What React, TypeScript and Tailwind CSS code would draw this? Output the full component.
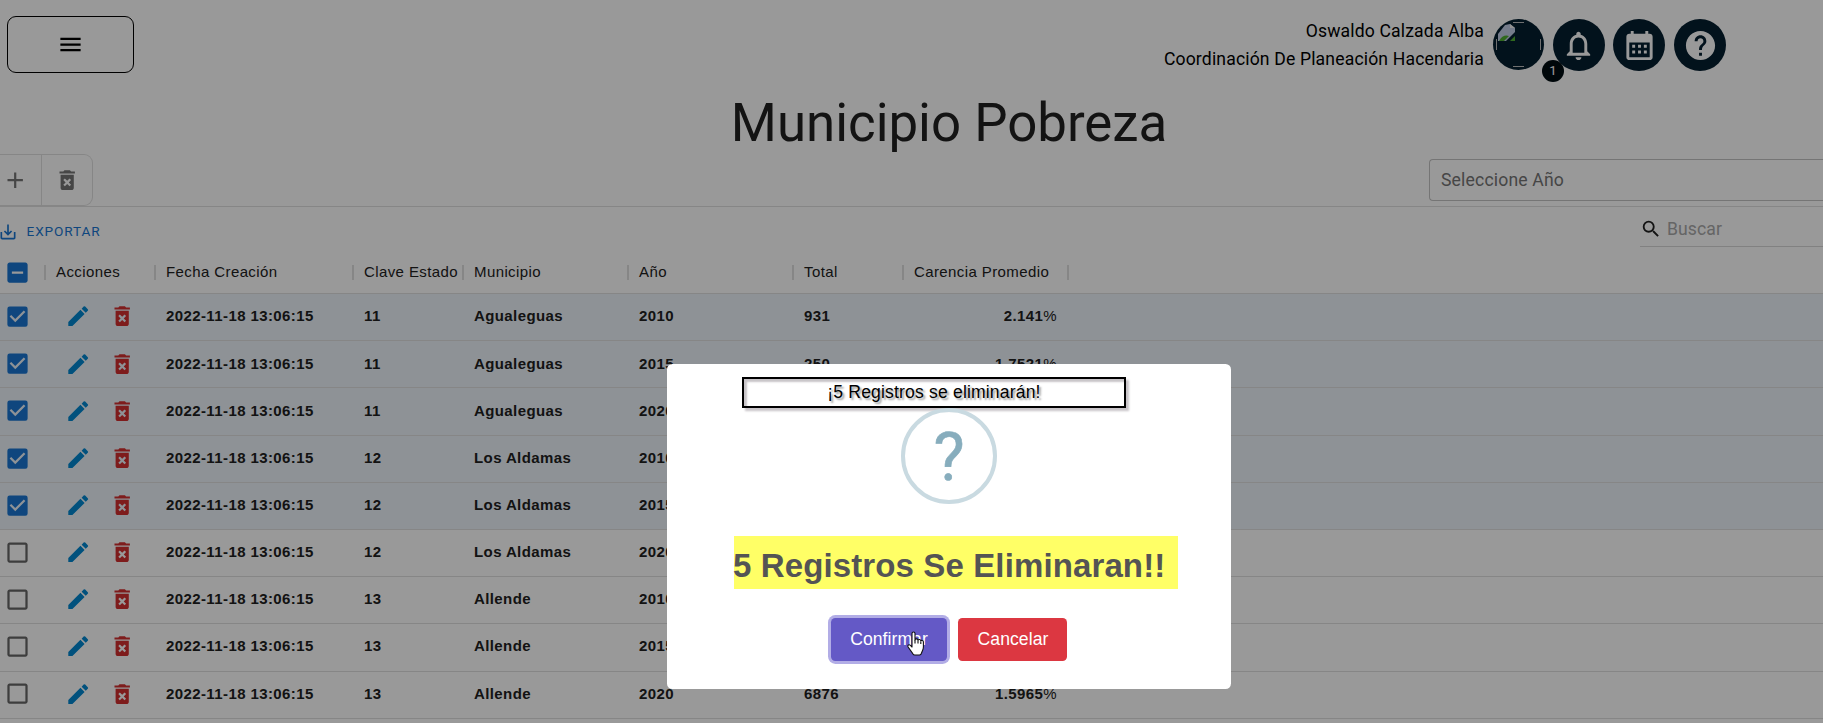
import React from "react";
import {
  MdMenu,
  MdAdd,
  MdDeleteForever,
  MdEdit,
  MdCheckBox,
  MdCheckBoxOutlineBlank,
  MdIndeterminateCheckBox,
  MdSearch,
  MdNotificationsNone,
  MdHelp,
} from "react-icons/md";

type Row = {
  clave: string;
  municipio: string;
  anio: string;
  total: string;
  carencia: string;
  selected: boolean;
};

const rows: Row[] = [
  { clave: "11", municipio: "Agualeguas", anio: "2010", total: "931", carencia: "2.141", selected: true },
  { clave: "11", municipio: "Agualeguas", anio: "2015", total: "250", carencia: "1.7521", selected: true },
  { clave: "11", municipio: "Agualeguas", anio: "2020", total: "", carencia: "", selected: true },
  { clave: "12", municipio: "Los Aldamas", anio: "2010", total: "", carencia: "", selected: true },
  { clave: "12", municipio: "Los Aldamas", anio: "2015", total: "", carencia: "", selected: true },
  { clave: "12", municipio: "Los Aldamas", anio: "2020", total: "", carencia: "", selected: false },
  { clave: "13", municipio: "Allende", anio: "2010", total: "", carencia: "", selected: false },
  { clave: "13", municipio: "Allende", anio: "2015", total: "", carencia: "", selected: false },
  { clave: "13", municipio: "Allende", anio: "2020", total: "6876", carencia: "1.5965", selected: false },
];

const columns = [
  { label: "Acciones", width: "w-[110px]" },
  { label: "Fecha Creación", width: "w-[198px]" },
  { label: "Clave Estado", width: "w-[110px]" },
  { label: "Municipio", width: "w-[165px]" },
  { label: "Año", width: "w-[165px]" },
  { label: "Total", width: "w-[110px]" },
  { label: "Carencia Promedio", width: "w-[165px]" },
];

function TopBar() {
  return (
    <header className="flex h-[88px] items-start pl-[7px] pr-[97px] pt-4">
      <button className="flex h-[57px] w-[127px] items-center justify-center rounded-[9px] border border-black text-black">
        <MdMenu size={27} className="-mt-px" />
      </button>
      <div className="ml-auto mt-px flex h-[56px] flex-col text-right text-[17.6px] leading-[28px] tracking-[0.15px] text-black">
        <span>Oswaldo Calzada Alba</span>
        <span>Coordinación De Planeación Hacendaria</span>
      </div>
      <div className="ml-[9px] mt-[3px] flex gap-[8.7px] text-white">
        <div className="relative flex size-[51px] items-center justify-center rounded-full bg-[#041e2f]">
          <BrokenPicture />
          <span className="absolute left-[49px] top-[41px] flex size-[22px] items-center justify-center rounded-full bg-[#000c12] text-[13.2px]">
            1
          </span>
        </div>
        <div className="flex size-[52px] items-center justify-center rounded-full bg-[#041e2f]">
          <MdNotificationsNone size={35} />
        </div>
        <div className="flex size-[52px] items-center justify-center rounded-full bg-[#041e2f]">
          <CalendarIcon />
        </div>
        <div className="flex size-[52px] items-center justify-center rounded-full bg-[#041e2f]">
          <MdHelp size={35} />
        </div>
      </div>
    </header>
  );
}

function BrokenPicture() {
  return (
    <svg width="51" height="51" viewBox="0 0 51 51" fill="none">
      <path d="M5 15 L12 6 L17 5 L22 9 V13 L13 22 H5Z" fill="#c3cfe8" />
      <path d="M6 22 Q10 15 16 17 L11 22Z" fill="#4fae32" />
      <path d="M17 22 L22 17 V22Z" fill="#4fae32" />
      <path d="M17 5 V9 H22Z" fill="#f4f4f4" />
      <path d="M20 3.500 H31 M20 47.500 H31 M3.500 20 V31 M47.500 20 V31" stroke="#bbb" />
    </svg>
  );
}

function CalendarIcon() {
  return (
    <svg width="35" height="35" viewBox="0 0 24 24" fill="currentColor">
      <path d="M19 4h-1V2h-2v2H8V2H6v2H5c-1.110 0-2 .9-2 2v14c0 1.100.89 2 2 2h14c1.100 0 2-.9 2-2V6c0-1.100-.9-2-2-2zm0 16H5V10h14v10zM7 11.500h2v2H7zM11 11.500h2v2h-2zM15 11.500h2v2h-2zM7 15.500h2v2H7zM11 15.500h2v2h-2zM15 15.500h2v2h-2z" />
    </svg>
  );
}

function ExportIcon() {
  return (
    <svg width="20" height="20" viewBox="0 0 24 24" fill="currentColor">
      <path d="M19 12v7H5v-7H3v7c0 1.100.9 2 2 2h14c1.100 0 2-.9 2-2v-7h-2zm-6 .67l2.590-2.580L17 11.500l-5 5-5-5 1.410-1.410L11 12.670V3h2z" />
    </svg>
  );
}

function Toolbar() {
  return (
    <>
      <div className="flex h-[52px] items-start justify-between">
        <div className="flex h-[52px] w-[93px] rounded-r-[9px] border border-l-0 border-[#e0e0e0] text-[#757575]">
          <div className="flex w-[42px] items-center justify-center border-r border-[#e0e0e0] pr-[11px]">
            <MdAdd size={26.4} className="shrink-0" />
          </div>
          <div className="flex flex-1 items-center justify-center">
            <MdDeleteForever size={26.4} />
          </div>
        </div>
        <div className="mt-[5px] flex h-[42px] w-[394px] items-center rounded-l-[4px] border border-r-0 border-[#c4c4c4] pl-[11px] text-[17.6px] tracking-[0.165px] text-[#757575]">
          Seleccione Año
        </div>
      </div>
      <div className="flex h-[46px] items-start justify-between border-t border-[#e0e0e0]">
        <div className="-ml-[2px] flex h-[49px] items-center gap-[8.5px] text-[13.6px] tracking-[0.9px] text-[#1976d2]">
          <ExportIcon />
          EXPORTAR
        </div>
        <div className="flex h-[40px] w-[183px] items-center gap-[5px] border-b border-[#d8d8d8] pt-[5px] text-[17.6px] tracking-[0.1px] text-[#a8a8a8]">
          <MdSearch size={22} className="text-[#212121]" />
          Buscar
        </div>
      </div>
    </>
  );
}

function Grid() {
  return (
    <div className="font-['Liberation_Sans',Arial,sans-serif] text-[15px] tracking-[0.4px] text-[#212121]">
      <div className="flex h-[42px] items-center border-b border-[#e0e0e0] pb-px">
        <div className="flex w-[45px] pl-[4px] text-[#1976d2]">
          <MdIndeterminateCheckBox size={27} />
        </div>
        {columns.map((column) => (
          <div key={column.label} className={"flex items-center whitespace-nowrap " + column.width}>
            <span className="-ml-px mr-[10px] h-[15px] w-[2px] bg-[#e0e0e0]" />
            {column.label}
          </div>
        ))}
        <span className="-ml-px h-[15px] w-[2px] bg-[#e0e0e0]" />
      </div>
      {rows.map((row, index) => (
        <div
          key={index}
          className={
            row.selected
              ? "flex h-[47.2px] items-center border-b border-[#e0e0e0] bg-[#edf4fb] pb-px font-bold"
              : "flex h-[47.2px] items-center border-b border-[#e0e0e0] pb-[1.5px] font-bold"
          }
        >
          <div className="w-[45px] pl-[4px]">
            {row.selected ? (
              <MdCheckBox size={27} className="text-[#1976d2]" />
            ) : (
              <MdCheckBoxOutlineBlank size={27} className="text-[#666]" />
            )}
          </div>
          <div className="flex w-[110px] items-center gap-[18px] pl-[20px]">
            <MdEdit size={26.4} className="text-[#0288d1]" />
            <MdDeleteForever size={26.4} className="text-[#d32f2f]" />
          </div>
          <div className="w-[198px] pl-[11px]">2022-11-18 13:06:15</div>
          <div className="w-[110px] pl-[11px]">{row.clave}</div>
          <div className="w-[165px] pl-[11px]">{row.municipio}</div>
          <div className="w-[165px] pl-[11px]">{row.anio}</div>
          <div className="w-[110px] pl-[11px]">{row.total}</div>
          <div className="w-[165px] pr-[11px] text-right">
            {row.carencia}
            {row.carencia && <span className="font-normal">%</span>}
          </div>
        </div>
      ))}
    </div>
  );
}

function HandCursor() {
  return (
    <svg
      className="absolute left-[75px] top-[13px]"
      width="20"
      height="26"
      viewBox="0 0 20 26"
      fill="#fff"
      stroke="#111"
      strokeWidth="1.1"
      strokeLinejoin="round"
    >
      <path d="M6 2.500c0-2 3-2 3 0V9c.3-1.600 3-1.400 3 .3.400-1.300 2.800-1 2.800.7.500-1 2.600-.7 2.600 1v5c0 3-1.400 4-1.900 6.200-.3 1.200-1 1.800-2 1.800H9c-1.200 0-1.900-.6-2.400-1.600L2.100 16c-1-1.800 1-3 2.300-1.600L6 16z" />
      <path d="M9 9v3.500M12 9.500v3M14.800 10.500v2.500" />
    </svg>
  );
}

function ConfirmDialog() {
  return (
    <div className="fixed inset-0 flex items-start bg-black/40 pl-[667px] pt-[364px]">
      <div className="flex h-[325px] w-[564px] flex-col items-center rounded-[5.5px] bg-white font-['Liberation_Sans',Arial,sans-serif]">
        <div className="mr-[30px] mt-[13px] flex h-[31px] w-[384px] items-center justify-center border-2 border-black text-[17.6px] tracking-[0.15px] text-black shadow-[3px_3px_2px_#c8c4c8,inset_3px_3px_2px_#c8c4c8] [text-shadow:2px_2px_2px_#999]">
          ¡5 Registros se eliminarán!
        </div>
        <div className="flex size-[96px] items-center justify-center rounded-full border-[4px] border-[#c9dae1] pt-[3px] font-['Roboto',sans-serif] text-[66px] leading-none text-[#87adbd] [-webkit-text-stroke:0.6px_#87adbd]">
          ?
        </div>
        <h2 className="ml-[14px] mt-[32px] flex h-[53px] w-[444px] items-center whitespace-nowrap bg-[#ffff66] pt-[7px] text-[33px] font-bold tracking-[0.12px] text-[#545454]">
          <span className="-ml-px">5 Registros Se Eliminaran!!</span>
        </h2>
        <div className="mr-[1px] mt-[29px] flex gap-[11px] text-[17.6px] tracking-[0.05px] text-white">
          <button className="relative flex h-[43px] w-[116px] items-center justify-center rounded-[4.4px] bg-[#6459c6] pl-px shadow-[0_0_0_3px_#b2ade6]">
            Confirmar
            <HandCursor />
          </button>
          <button className="flex h-[43px] w-[109px] items-center justify-center rounded-[4.4px] bg-[#dc3741] pl-[2px]">
            Cancelar
          </button>
        </div>
      </div>
    </div>
  );
}

export default function App() {
  return (
    <div className="h-[723px] w-full overflow-hidden bg-white font-['Roboto',sans-serif]">
      <TopBar />
      <h1 className="flex h-[66px] items-center justify-center pl-[75px] pt-[4px] text-[52.8px] leading-none text-[#212121]">
        Municipio Pobreza
      </h1>
      <Toolbar />
      <Grid />
      <ConfirmDialog />
    </div>
  );
}
